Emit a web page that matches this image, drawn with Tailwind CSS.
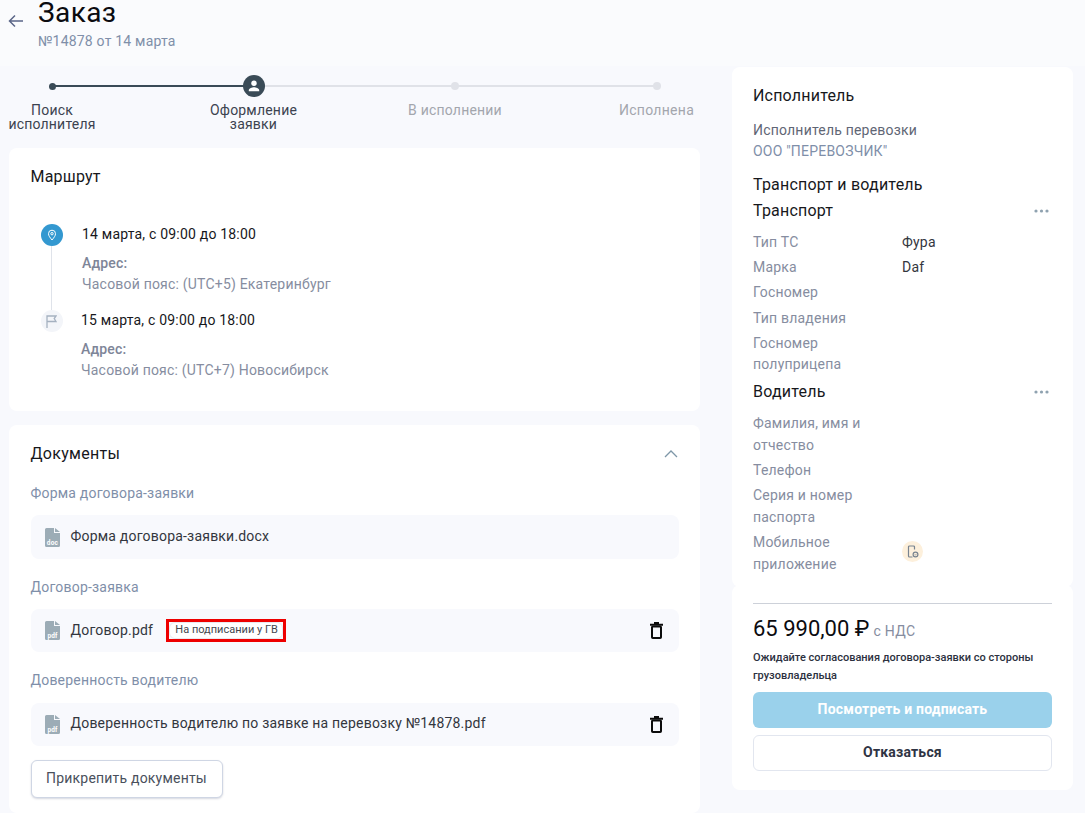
<!DOCTYPE html>
<html lang="ru">
<head>
<meta charset="utf-8">
<script src="https://cdn.jsdelivr.net/npm/@tailwindcss/browser@4"></script>
</head>
<body class="m-0">
<div class="w-[1085px] h-[813px] overflow-hidden bg-[#f8f9fd] font-['Roboto',sans-serif] flex flex-col text-[14px] tracking-[0.2px]">
  <header class="h-[66px] shrink-0 bg-[#fafbfd] flex items-start pl-[8px]">
    <svg class="w-[16px] h-[14px] mt-[14px]" viewBox="0 0 16 14" fill="none" stroke="#5a6688" stroke-width="1.500"><path d="M15 7H1.500M7 1.500 1.500 7 7 12.500"/></svg>
    <div class="ml-[14px]">
      <h1 class="text-[28px] leading-[26px] text-[#0b0b0f] tracking-[0.4px]">Заказ</h1>
      <p class="text-[#7f8fa9] leading-[16px] mt-[7px] tracking-[0.2px]">№14878 от 14 марта</p>
    </div>
  </header>
  <div class="flex-1 flex items-start min-h-0">
    <main class="w-[691px] ml-[9px] shrink-0">
      <section class="relative h-[82px]">
        <div class="absolute left-[43px] top-[19px] w-[202px] h-[2px] bg-[#3a4b57]"></div>
        <div class="absolute left-[245px] top-[19px] w-[403px] h-[2px] bg-[#e0e2e8]"></div>
        <div class="absolute left-[40px] top-[17px] w-[7px] h-[7px] rounded-full bg-[#3a4b57]"></div>
        <div class="absolute left-[234px] top-[9px] w-[22px] h-[22px] rounded-full bg-[#3a4b57] flex items-center justify-center">
          <svg class="w-[14px] h-[14px]" viewBox="0 0 14 14" fill="#fff"><circle cx="7" cy="4.200" r="2.700"/><path d="M1.800 12.200v-1c0-1.900 3.400-2.900 5.200-2.900s5.200 1 5.200 2.900v1z"/></svg>
        </div>
        <div class="absolute left-[442px] top-[16px] w-[8px] h-[8px] rounded-full bg-[#e0e2e8]"></div>
        <div class="absolute left-[644px] top-[16px] w-[8px] h-[8px] rounded-full bg-[#e0e2e8]"></div>
        <div class="absolute left-[-9.500px] top-[37px] w-[105px] text-center leading-[14px] text-[#3c4350]">Поиск<br>исполнителя</div>
        <div class="absolute left-[189.500px] top-[37px] w-[110px] text-center leading-[14px] text-[#3c4350]">Оформление<br>заявки</div>
        <div class="absolute left-[388px] top-[37px] w-[116px] text-center leading-[14px] text-[#a3a6ad]">В исполнении</div>
        <div class="absolute left-[600px] top-[37px] w-[95px] text-center leading-[14px] text-[#a3a6ad] tracking-[0.3px]">Исполнена</div>
      </section>
      <section class="bg-white rounded-[8px] h-[263px] pt-[20px] pl-[21.500px]">
        <h2 class="text-[16px] leading-[18px] text-[#17181c]">Маршрут</h2>
        <div class="mt-[38px] flex">
          <div class="flex flex-col items-center w-[22px] ml-[10px]">
            <div class="w-[22px] h-[22px] rounded-full bg-[#3398d0] flex items-center justify-center">
              <svg class="w-[12px] h-[12px]" viewBox="0 0 12 12" fill="none" stroke="#fff" stroke-width="1"><path d="M6 11C4 8.500 2.500 6.800 2.500 4.700a3.500 3.500 0 0 1 7 0C9.500 6.800 8 8.500 6 11z"/><circle cx="6" cy="4.700" r="1.200"/></svg>
            </div>
            <div class="w-px h-[64px] bg-[#dfe3ea]"></div>
            <div class="w-[22px] h-[22px] rounded-full bg-[#f3f5f9] flex items-center justify-center">
              <svg class="w-[11px] h-[13px]" viewBox="0 0 11 13" fill="none" stroke="#a5b1c0" stroke-width="1.300"><path d="M1 13V1h9L8.200 3.500 10 6.500H1"/></svg>
            </div>
          </div>
          <div class="ml-[19.500px] -mt-px">
            <div class="h-[86px]">
              <p class="leading-[22px] text-[#17181c]">14 марта, с 09:00 до 18:00</p>
              <p class="mt-[8px] leading-[21px] font-medium text-[#7e8598]">Адрес:</p>
              <p class="leading-[21px] text-[#868da0]">Часовой пояс: (UTC+5) Екатеринбург</p>
            </div>
            <div class="-ml-[1px]">
              <p class="leading-[22px] text-[#17181c]">15 марта, с 09:00 до 18:00</p>
              <p class="mt-[8px] leading-[21px] font-medium text-[#7e8598]">Адрес:</p>
              <p class="leading-[21px] text-[#868da0]">Часовой пояс: (UTC+7) Новосибирск</p>
            </div>
          </div>
        </div>
      </section>
      <section class="bg-white rounded-[8px] mt-[14px] h-[388px] px-[21.500px] pt-[20px]">
        <div class="flex items-center justify-between h-[18px]">
          <h2 class="text-[16px] leading-[18px] text-[#17181c] tracking-[0.3px]">Документы</h2>
          <svg class="w-[14px] h-[8px] mr-[0.500px]" viewBox="0 0 14 8" fill="none" stroke="#7e97a8" stroke-width="1.300"><path d="M1 7l6-6 6 6"/></svg>
        </div>
        <p class="mt-[20px] leading-[20px] text-[#7f8fa9]">Форма договора-заявки</p>
        <div class="mt-[12px] h-[44px] rounded-[8px] bg-[#f8f9fd] flex items-center pl-[14px] pr-[14px] gap-[11px]">
          <svg class="w-[15px] h-[19px] shrink-0" viewBox="0 0 15 19"><path fill="#9cacb6" d="M1.500 0H9v5h6v12.500a1.500 1.500 0 0 1-1.500 1.500h-12A1.500 1.500 0 0 1 0 17.500v-16A1.500 1.500 0 0 1 1.500 0zM10 0l5 4h-5z"/><text x="7.500" y="16.500" text-anchor="middle" font-size="6.500" font-family="Roboto" font-weight="700" fill="#fff">doc</text></svg>
          <span class="text-[#33363e] -mt-[2px]">Форма договора-заявки.docx</span>
        </div>
        <p class="mt-[18px] leading-[20px] text-[#7f8fa9]">Договор-заявка</p>
        <div class="mt-[12px] h-[43px] rounded-[8px] bg-[#f8f9fd] flex items-center pl-[14px] pr-[14px] gap-[11px]">
          <svg class="w-[15px] h-[19px] shrink-0" viewBox="0 0 15 19"><path fill="#9cacb6" d="M1.500 0H9v5h6v12.500a1.500 1.500 0 0 1-1.500 1.500h-12A1.500 1.500 0 0 1 0 17.500v-16A1.500 1.500 0 0 1 1.500 0zM10 0l5 4h-5z"/><text x="7.500" y="16.500" text-anchor="middle" font-size="6.500" font-family="Roboto" font-weight="700" fill="#fff">pdf</text></svg>
          <span class="text-[#33363e]">Договор.pdf</span>
          <span class="ml-[2px] h-[23px] w-[120px] border-[3px] border-[#ee0000] flex">
            <span class="flex-1 rounded-[6px] bg-white border border-[#e8eaf0] flex items-center justify-center pl-[1px] text-[11px] tracking-normal text-[#44474f]">На подписании у ГВ</span>
          </span>
          <svg class="ml-auto mr-[1px] w-[15px] h-[17px]" viewBox="0 0 15 17" fill="none" stroke="#0c0c0c" stroke-width="2"><path d="M1 2.700h13M5 1h5"/><rect x="3" y="4.500" width="9" height="11.500" rx="0.800"/></svg>
        </div>
        <p class="mt-[18px] leading-[20px] text-[#7f8fa9]">Доверенность водителю</p>
        <div class="mt-[13px] h-[43px] rounded-[8px] bg-[#f8f9fd] flex items-center pl-[14px] pr-[14px] gap-[11px]">
          <svg class="w-[15px] h-[19px] shrink-0" viewBox="0 0 15 19"><path fill="#9cacb6" d="M1.500 0H9v5h6v12.500a1.500 1.500 0 0 1-1.500 1.500h-12A1.500 1.500 0 0 1 0 17.500v-16A1.500 1.500 0 0 1 1.500 0zM10 0l5 4h-5z"/><text x="7.500" y="16.500" text-anchor="middle" font-size="6.500" font-family="Roboto" font-weight="700" fill="#fff">pdf</text></svg>
          <span class="text-[#33363e] -mt-[2px]">Доверенность водителю по заявке на перевозку №14878.pdf</span>
          <svg class="ml-auto mr-[1px] w-[15px] h-[17px]" viewBox="0 0 15 17" fill="none" stroke="#0c0c0c" stroke-width="2"><path d="M1 2.700h13M5 1h5"/><rect x="3" y="4.500" width="9" height="11.500" rx="0.800"/></svg>
        </div>
        <button class="mt-[14px] w-[192px] h-[38px] pb-[2px] rounded-[6px] bg-white border border-[#cfd6e4] shadow-[0_1px_2px_rgba(90,100,130,0.25)] text-[#4a505c] text-[14px]">Прикрепить документы</button>
      </section>
    </main>
    <aside class="w-[341px] ml-[32px] shrink-0 mt-[1px]">
      <section class="bg-white rounded-[8px] h-[520px] px-[21px] pt-[19px]">
        <h2 class="text-[16px] leading-[20px] text-[#17181c]">Исполнитель</h2>
        <p class="mt-[14px] leading-[21px] text-[#5f6675]">Исполнитель перевозки</p>
        <p class="leading-[21px] text-[#7f8fa9]">ООО "ПЕРЕВОЗЧИК"</p>
        <h2 class="mt-[13px] text-[16px] leading-[20px] text-[#17181c]">Транспорт и водитель</h2>
        <div class="mt-[6px] flex items-center justify-between h-[20px]">
          <h3 class="text-[16px] leading-[20px] text-[#17181c]">Транспорт</h3>
          <svg class="w-[15px] h-[4px] mr-[3px]" viewBox="0 0 15 4" fill="#8fa2b0"><circle cx="2" cy="2" r="1.600"/><circle cx="7.500" cy="2" r="1.600"/><circle cx="13" cy="2" r="1.600"/></svg>
        </div>
        <dl class="mt-[11px] grid grid-cols-[149px_1fr] leading-[21px] gap-y-[4.200px]">
          <dt class="text-[#868da0]">Тип ТС</dt><dd class="text-[#33363e]">Фура</dd>
          <dt class="text-[#868da0]">Марка</dt><dd class="text-[#33363e]">Daf</dd>
          <dt class="text-[#868da0]">Госномер</dt><dd></dd>
          <dt class="text-[#868da0]">Тип владения</dt><dd></dd>
          <dt class="text-[#868da0]">Госномер<br>полуприцепа</dt><dd></dd>
        </dl>
        <div class="mt-[7.400px] flex items-center justify-between h-[20px]">
          <h3 class="text-[16px] leading-[20px] text-[#17181c]">Водитель</h3>
          <svg class="w-[15px] h-[4px] mr-[3px]" viewBox="0 0 15 4" fill="#8fa2b0"><circle cx="2" cy="2" r="1.600"/><circle cx="7.500" cy="2" r="1.600"/><circle cx="13" cy="2" r="1.600"/></svg>
        </div>
        <dl class="mt-[11px] grid grid-cols-[149px_1fr] leading-[21.500px] gap-y-[3.800px]">
          <dt class="text-[#868da0]">Фамилия, имя и<br>отчество</dt><dd></dd>
          <dt class="text-[#868da0]">Телефон</dt><dd></dd>
          <dt class="text-[#868da0]">Серия и номер<br>паспорта</dt><dd></dd>
          <dt class="text-[#868da0]">Мобильное<br>приложение</dt>
          <dd class="flex items-center">
            <span class="w-[21px] h-[21px] mb-[5px] rounded-full bg-[#fdf0dc] flex items-center justify-center">
              <svg class="w-[13px] h-[13px]" viewBox="0 0 13 13" fill="none" stroke="#78838f" stroke-width="1.200"><path d="M8.500 4.500V2a1 1 0 0 0-1-1h-4a1 1 0 0 0-1 1v9a1 1 0 0 0 1 1h3"/><circle cx="9.500" cy="9.500" r="2.400"/><path d="M8.600 9.500l.7.7 1.200-1.300" stroke-width="0.700"/></svg>
            </span>
          </dd>
        </dl>
      </section>
      <section class="bg-white rounded-[8px] -mt-[2px] h-[205px] px-[21px] pt-[18px]">
        <div class="h-px bg-[#cdd1d9]"></div>
        <div class="mt-[11px] flex items-baseline h-[28px]">
          <span class="text-[22px] leading-[28px] text-[#0b0b0f] tracking-normal">65 990,00 ₽</span>
          <span class="ml-[4px] text-[#868da0] tracking-[0.3px]">с НДС</span>
        </div>
        <p class="mt-[6px] text-[11px] leading-[18px] font-medium text-[#2c3140] tracking-normal">Ожидайте согласования договора-заявки со стороны грузовладельца</p>
        <button class="mt-[7px] block w-full h-[36px] pb-[2px] rounded-[6px] bg-[#9ad1eb] text-white font-bold text-[14px]">Посмотреть и подписать</button>
        <button class="mt-[7px] block w-full h-[36px] pb-[2px] rounded-[6px] bg-white border border-[#e2e6ef] text-[#2f3444] font-bold text-[14px]">Отказаться</button>
      </section>
    </aside>
  </div>
</div>
</body>
</html>
